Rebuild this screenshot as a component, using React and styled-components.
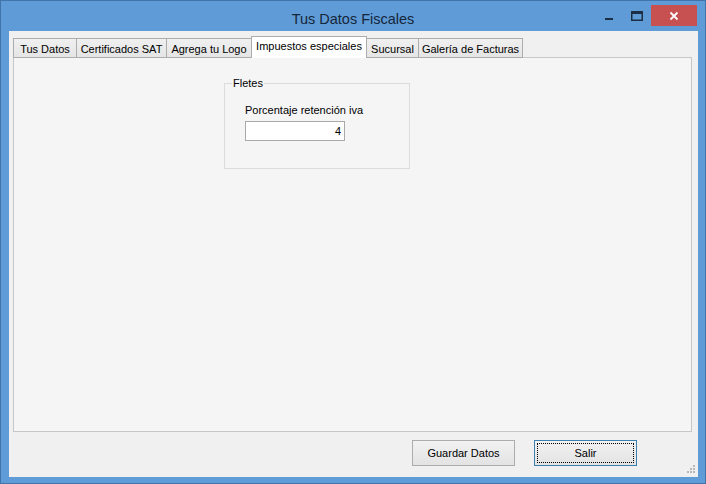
import React from 'react'
import styled, { createGlobalStyle } from 'styled-components'

const GlobalStyle = createGlobalStyle`
  html, body {
    margin: 0;
    padding: 0;
    background: #ffffff;
  }
  body {
    font-family: "Liberation Sans", Arial, sans-serif;
  }
`

const tabs = [
  { label: 'Tus Datos', width: 64 },
  { label: 'Certificados SAT', width: 91 },
  { label: 'Agrega tu Logo', width: 86 },
  { label: 'Impuestos especiales', width: 116, active: true },
  { label: 'Sucursal', width: 53 },
  { label: 'Galería de Facturas', width: 105 },
]

const App = () => {
  return (
    <>
      <GlobalStyle />
      <Window>
        <TitleBar>
          <span />
          <Title>Tus Datos Fiscales</Title>
          <Caption>
            <CaptionButton>
              <svg width="10" height="10" viewBox="0 0 10 10">
                <rect x="1" y="7" width="8" height="2" fill="#1b2e45" />
              </svg>
            </CaptionButton>
            <CaptionButton>
              <svg width="12" height="10" viewBox="0 0 12 10">
                <rect x="0.75" y="0.75" width="10.5" height="8.5" fill="none" stroke="#1b2e45" strokeWidth="1.5" />
                <rect x="1" y="1" width="10" height="2" fill="#1b2e45" />
              </svg>
            </CaptionButton>
            <CloseButton>
              <svg width="10" height="10" viewBox="0 0 10 10">
                <path d="M1.5 1.5 L8.5 8.5 M8.5 1.5 L1.5 8.5" stroke="#ffffff" strokeWidth="1.8" />
              </svg>
            </CloseButton>
          </Caption>
        </TitleBar>

        <Client>
          <TabControl>
            <TabStrip>
              {tabs.map((t) => (
                <Tab key={t.label} $active={t.active} $w={t.width}>
                  {t.label}
                </Tab>
              ))}
            </TabStrip>
            <TabPage>
              <GroupBox>
                <Legend>Fletes</Legend>
                <GroupBody>
                  <FieldLabel>Porcentaje retención iva</FieldLabel>
                  <TextBox defaultValue="4" />
                </GroupBody>
              </GroupBox>
            </TabPage>
          </TabControl>

          <Footer>
            <Button>Guardar Datos</Button>
            <Button $default>
              <Focus>Salir</Focus>
            </Button>
            <Grip>
              <svg width="10" height="10" viewBox="0 0 10 10">
                {[[8, 0], [8, 3], [5, 3], [8, 6], [5, 6], [2, 6]].map(([x, y]) => (
                  <rect key={`${x}-${y}`} x={x} y={y + 1} width="2" height="2" fill="#b8b8b8" />
                ))}
              </svg>
            </Grip>
          </Footer>
        </Client>
      </Window>
    </>
  )
}

export default App

const Window = styled.div`
  width: 706px;
  height: 484px;
  box-sizing: border-box;
  background: #5f9bd6;
  border: 1px solid #4174aa;
  display: flex;
  flex-direction: column;
`

const TitleBar = styled.div`
  height: 30px;
  display: grid;
  grid-template-columns: 1fr auto 1fr;
  align-items: start;
`

const Title = styled.div`
  padding-top: 10px;
  font-size: 14.5px;
  color: #15263b;
`

const Caption = styled.div`
  display: flex;
  justify-content: flex-end;
  align-items: flex-start;
  padding-top: 4px;
  padding-right: 8px;
`

const CaptionButton = styled.div`
  width: 27px;
  height: 21px;
  display: flex;
  align-items: center;
  justify-content: center;
  margin-right: 1px;
`

const CloseButton = styled.div`
  width: 46px;
  height: 21px;
  background: #c75050;
  display: flex;
  align-items: center;
  justify-content: center;
`

const Client = styled.div`
  flex: 1;
  margin: 0 7px 6px 8px;
  background: #f0f0f0;
  display: flex;
  flex-direction: column;
  padding: 5px 6px 0 4px;
  position: relative;
`

const TabControl = styled.div`
  display: flex;
  flex-direction: column;
  height: 396px;
`

const TabStrip = styled.div`
  display: flex;
  align-items: flex-end;
  height: 22px;
  margin-bottom: -1px;
  position: relative;
  z-index: 1;
`

const Tab = styled.div`
  box-sizing: border-box;
  width: ${(p) => p.$w}px;
  height: ${(p) => (p.$active ? 22 : 20)}px;
  margin-left: -1px;
  display: flex;
  align-items: ${(p) => (p.$active ? 'flex-start' : 'center')};
  justify-content: center;
  padding-top: ${(p) => (p.$active ? 3 : 1)}px;
  font-size: 11px;
  color: #000;
  white-space: nowrap;
  border: 1px solid #acacac;
  border-bottom: ${(p) => (p.$active ? 'none' : '1px solid #acacac')};
  background: ${(p) =>
    p.$active ? '#ffffff' : 'linear-gradient(#f0f0f0, #e5e5e5)'};
  &:first-child {
    margin-left: 0;
  }
`

const TabPage = styled.div`
  flex: 1;
  box-sizing: border-box;
  border: 1px solid #c7c7c7;
  background: #f5f5f5;
  padding: 19px 0 0 210px;
`

const GroupBox = styled.fieldset`
  box-sizing: border-box;
  width: 186px;
  height: 92px;
  margin: 0;
  padding: 0;
  border: 1px solid #dcdcdc;
  border-radius: 0;
  min-width: 0;
`

const Legend = styled.legend`
  font-size: 11px;
  color: #000;
  padding: 0 1px;
  margin-left: 7px;
`

const GroupBody = styled.div`
  padding: 15px 0 0 20px;
`

const FieldLabel = styled.div`
  font-size: 11px;
  color: #000;
  line-height: 13px;
  margin-bottom: 4px;
`

const TextBox = styled.input`
  box-sizing: border-box;
  width: 100px;
  height: 20px;
  border: 1px solid #a9a9a9;
  background: #ffffff;
  font-family: "Liberation Sans", Arial, sans-serif;
  font-size: 11px;
  text-align: right;
  padding: 0 3px;
  outline: none;
  margin: 0;
`

const Footer = styled.div`
  display: flex;
  justify-content: flex-end;
  gap: 19px;
  padding: 8px 55px 0 0;
`

const Button = styled.div`
  box-sizing: border-box;
  width: 103px;
  height: 26px;
  display: flex;
  align-items: center;
  justify-content: center;
  font-size: 11px;
  color: #000;
  background: linear-gradient(#f2f2f2, #e3e3e3);
  border: 1px solid ${(p) => (p.$default ? '#3c7fb1' : '#acacac')};
  padding: ${(p) => (p.$default ? '2px' : '0')};
`

const Focus = styled.div`
  box-sizing: border-box;
  width: 100%;
  height: 100%;
  display: flex;
  align-items: center;
  justify-content: center;
  border: 1px dotted #000;
`

const Grip = styled.div`
  position: absolute;
  right: 3px;
  bottom: 3px;
  line-height: 0;
`
